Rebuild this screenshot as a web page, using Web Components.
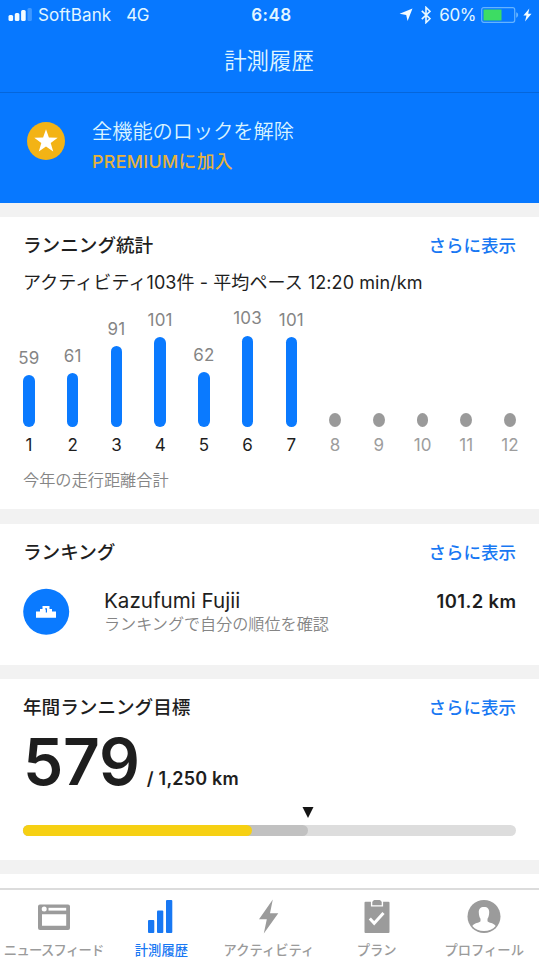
<!DOCTYPE html>
<html lang="ja">
<head>
<meta charset="utf-8">
<meta name="viewport" content="width=device-width, initial-scale=1">
<title>計測履歴</title>
<style>
body {
  margin: 0;
  background: #f2f2f2;
  color: #1e1e1e;
  font-family: Inter, "Noto Sans CJK JP", sans-serif;
  overflow: hidden;
}
</style>
</head>
<body>
<run-app></run-app>

<script>
/**
 * Base class: every element clones its own template into an open shadow root
 */
class BaseElement extends HTMLElement {
  constructor () {
    super()
    const template = document.createElement('template')
    template.innerHTML = this.constructor.markup
    this.attachShadow({ mode: 'open' })
    this.shadowRoot.appendChild(template.content.cloneNode(true))
  }

  $ (selector) {
    return this.shadowRoot.querySelector(selector)
  }
}

/**
 * Carrier, clock and battery
 */
class StatusBar extends BaseElement {
  static markup = /* HTML */`
  <style>
  :host {
    display: grid;
    grid-template-columns: 1fr auto 1fr;
    align-items: center;
    height: 30px;
    padding: 0 7px 0 8px;
    background: #0778ff;
    color: #e2f6ff;
    font-size: 17px;
    line-height: 30px;
    box-sizing: border-box;
  }
  div {
    display: flex;
    align-items: center;
  }
  svg {
    display: block;
    flex: none;
  }
  .carrier { margin-left: 6px; letter-spacing: 0.1px; }
  .network { margin-left: 15px; letter-spacing: -0.4px; }
  .time { padding-left: 3px; font-weight: 600; letter-spacing: 0.5px; }
  .right { justify-content: flex-end; }
  .percent { margin: 0 5px 0 8px; letter-spacing: -0.4px; }
  </style>
  <div class="left">
    <svg width="24" height="14" viewBox="0 0 24 14">
      <g fill="#f4fcff">
        <rect x="0.5" y="7" width="4.6" height="6" rx="1.5"/>
        <rect x="6.8" y="5" width="4.6" height="8" rx="1.5"/>
        <rect x="13.1" y="2" width="4.6" height="11" rx="1.5"/>
      </g>
      <rect x="19.5" y="0" width="4.4" height="13" rx="1.5" fill="#3f98ff"/>
    </svg>
    <span class="carrier">SoftBank</span>
    <span class="network">4G</span>
  </div>
  <span class="time">6:48</span>
  <div class="right">
    <svg width="14" height="14" viewBox="0 0 14 14"><path d="M13.5 .5 8.6 13 7.2 6.9.6 5.8Z" fill="#f4fcff"/></svg>
    <svg width="10" height="18" viewBox="0 0 10 18" style="margin-left: 8px"><path d="M.8 4.8 9 12.7 5 16.6V1.4L9 5.3.8 13.2" fill="none" stroke="#e9f9ff" stroke-width="1.6"/></svg>
    <span class="percent">60%</span>
    <svg width="38" height="18" viewBox="0 0 38 18">
      <rect x=".7" y="1.7" width="33" height="14.6" rx="2" fill="none" stroke="#65b3ff" stroke-width="1.2"/>
      <rect x="2.5" y="3.5" width="18" height="11" fill="#3ddc63"/>
      <path d="M35.2 6.3c2.6.8 2.6 4.6 0 5.4Z" fill="#65b3ff"/>
    </svg>
    <svg width="9" height="14" viewBox="0 0 9 14" style="margin-left: 4px"><path d="M6.3.6.4 7.6h3.1L2 13.4l6.5-7.6H5.2Z" fill="#f4fcff"/></svg>
  </div>
  `
}

class NavHeader extends BaseElement {
  static markup = /* HTML */`
  <style>
  :host {
    display: block;
    height: 63px;
    box-sizing: border-box;
    padding-right: 1px;
    background: #0778ff;
    border-bottom: 1px solid #0566db;
    color: #e0f6ff;
    font-size: 22.4px;
    font-weight: 350;
    line-height: 62px;
    text-align: center;
  }
  </style>
  <slot></slot>
  `
}

class PremiumBanner extends BaseElement {
  static markup = /* HTML */`
  <style>
  :host {
    display: flex;
    align-items: flex-start;
    height: 110px;
    box-sizing: border-box;
    padding: 25px 26px;
    background: #0778ff;
  }
  svg {
    display: block;
    margin-top: 2.5px;
  }
  .text {
    margin-left: 26px;
  }
  .title {
    color: #d9f3ff;
    font-size: 20.2px;
    font-weight: 350;
    line-height: 28px;
  }
  .join {
    margin-top: 1px;
    color: #e6b23c;
    font-size: 17.8px;
    font-weight: 500;
    letter-spacing: 0.35px;
    line-height: 30px;
  }
  </style>
  <svg width="40" height="40" viewBox="0 0 40 40">
    <circle cx="20" cy="20" r="19" fill="#f3b315"/>
    <path d="M20 8.2l2.9 8.3 8.8.2-7 5.3 2.5 8.4-7.2-5-7.2 5 2.5-8.4-7-5.3 8.8-.2Z" fill="#fff"/>
  </svg>
  <div class="text">
    <div class="title"><slot name="title"></slot></div>
    <div class="join"><slot name="join"></slot></div>
  </div>
  `
}

/**
 * White card with a heading and a "more" link
 */
class SectionCard extends BaseElement {
  static markup = /* HTML */`
  <style>
  :host {
    display: block;
    box-sizing: border-box;
    margin-top: 14px;
    padding: 14px 23px 0;
    background: #fff;
  }
  header {
    display: flex;
    justify-content: space-between;
    align-items: center;
    height: 28px;
    line-height: 28px;
  }
  .heading {
    font-size: 18.6px;
    font-weight: 500;
  }
  .more {
    padding-top: 1px;
    color: #1878f3;
    font-size: 17.5px;
    font-weight: 500;
  }
  </style>
  <header>
    <span class="heading"><slot name="heading"></slot></span>
    <span class="more">さらに表示</span>
  </header>
  <slot></slot>
  `
}

/**
 * One month of the chart
 * @var value distance, left out for months to come
 * @var size height of the bar in px
 */
class MonthBar extends BaseElement {
  static markup = /* HTML */`
  <style>
  :host {
    display: flex;
    flex-direction: column;
    align-items: center;
    justify-content: flex-end;
    font-size: 17px;
  }
  .value {
    color: #858585;
    line-height: 24px;
    margin-bottom: 5.5px;
    letter-spacing: 0.2px;
  }
  .bar {
    width: 11.6px;
    border-radius: 6px;
    background: #0a7aff;
  }
  .month {
    margin-top: 6px;
    line-height: 24px;
  }
  :host([future]) .bar {
    border-radius: 6px / 7px;
    background: #9a9a9a;
  }
  :host([future]) .month { color: #9d9d9d; }
  </style>
  <span class="value"></span>
  <span class="bar"></span>
  <span class="month"></span>
  `

  connectedCallback () {
    const value = this.getAttribute('value')
    this.toggleAttribute('future', !value)
    if (value) {
      this.$('.value').textContent = value
    } else {
      this.$('.value').remove()
    }
    this.$('.bar').style.height = `${this.getAttribute('size') || 14}px`
    this.$('.month').textContent = this.getAttribute('month')
  }
}

class YearChart extends BaseElement {
  static markup = /* HTML */`
  <style>
  :host { display: block; }
  .summary {
    margin-top: 10px;
    font-size: 18px;
    letter-spacing: 0.08px;
    line-height: 28px;
    white-space: nowrap;
  }
  .months {
    display: grid;
    grid-template-columns: repeat(12, 1fr);
    height: 160px;
    margin: 0 -15.9px;
  }
  .note {
    margin-top: 9px;
    color: #858585;
    font-size: 16.2px;
    font-weight: 350;
    line-height: 28px;
  }
  </style>
  <div class="summary"><slot name="summary"></slot></div>
  <div class="months"></div>
  <div class="note"><slot name="note"></slot></div>
  `

  connectedCallback () {
    const values = [[59, 52], [61, 54], [91, 81], [101, 90], [62, 55], [103, 91.5], [101, 90]]
    for (let i = 0; i < 12; i++) {
      const bar = document.createElement('month-bar')
      bar.setAttribute('month', i + 1)
      if (values[i]) {
        bar.setAttribute('value', values[i][0])
        bar.setAttribute('size', values[i][1])
      }
      this.$('.months').appendChild(bar)
    }
  }
}

class RankRow extends BaseElement {
  static markup = /* HTML */`
  <style>
  :host {
    display: flex;
    align-items: flex-start;
    margin-top: 22px;
  }
  svg { display: block; }
  .person {
    flex: 1;
    margin-left: 34px;
  }
  .name {
    font-size: 20.6px;
    line-height: 25px;
  }
  .hint {
    color: #858585;
    font-size: 16.1px;
    line-height: 22px;
    font-weight: 350;
  }
  .distance {
    font-size: 18.4px;
    font-weight: 600;
    letter-spacing: 0.4px;
    line-height: 27px;
    margin-right: -0.4px;
  }
  </style>
  <svg width="47" height="47" viewBox="0 0 47 47">
    <circle cx="23.2" cy="23.7" r="23" fill="#0a7aff"/>
    <path d="M13 23.5h4V21h2.500v-3h7v3H29v2.500h4v6.200H13Z" fill="#fff"/>
    <path d="M22.200 20.300h1.800v4.200h-1.200v-3h-.6Z" fill="#0a7aff"/>
  </svg>
  <div class="person">
    <div class="name"><slot name="name"></slot></div>
    <div class="hint"><slot name="hint"></slot></div>
  </div>
  <div class="distance"><slot name="distance"></slot></div>
  `
}

class GoalProgress extends BaseElement {
  static markup = /* HTML */`
  <style>
  :host { display: block; }
  .numbers {
    display: flex;
    align-items: baseline;
    height: 86px;
    line-height: 81px;
    white-space: nowrap;
  }
  .done {
    font-size: 64px;
    font-weight: 600;
    letter-spacing: -0.2px;
  }
  .total {
    margin-left: 7px;
    font-size: 18px;
    font-weight: 600;
    letter-spacing: 0.2px;
  }
  .marker {
    display: block;
    width: 12px;
    height: 11px;
    margin: 0 0 6.5px 279px;
  }
  .track {
    display: grid;
    height: 11.5px;
    border-radius: 6px;
    background: #ddd;
  }
  .track span {
    grid-area: 1 / 1;
    border-radius: 6px;
  }
  .expected {
    width: 57.8%;
    background: #c1c1c1;
  }
  .run {
    width: 46.4%;
    background: #f6d013;
  }
  </style>
  <div class="numbers">
    <span class="done"><slot name="done"></slot></span>
    <span class="total"><slot name="total"></slot></span>
  </div>
  <svg class="marker" viewBox="0 0 12 11"><path d="M.5 0h11L6 11Z" fill="#151515"/></svg>
  <div class="track"><span class="expected"></span><span class="run"></span></div>
  `
}

const icons = {
  feed: `
    <path fill-rule="evenodd" d="M3 5.5h28a2 2 0 0 1 2 2V29a2 2 0 0 1-2 2H3a2 2 0 0 1-2-2V7.5a2 2 0 0 1 2-2ZM5 15.2v11.6h24.2V15.2Z"/>
    <circle cx="7.2" cy="10" r="2.5" fill="#fff"/>
    <path d="M11.5 8.8h17.7v2.8H11.5Z" fill="#fff"/>`,
  stats: `
    <rect x="4" y="21" width="6.3" height="13" rx="1"/>
    <rect x="13" y="11.5" width="6.3" height="22.5" rx="1"/>
    <rect x="22" y="1" width="6.3" height="33" rx="1"/>`,
  bolt: '<path d="M20.8.5 7 20.2h7.8L11.8 34.500 26.300 14.200H18Z"/>',
  plan: `
    <path d="M5.5 2.8h5.400v4.700h12.200V2.800h5.400a1 1 0 0 1 1 1V33a1 1 0 0 1-1 1h-23a1 1 0 0 1-1-1V3.800a1 1 0 0 1 1-1Z"/>
    <path d="M12.300 6.200V3.500Q12.300 1.500 14.300 1h5.400q2 .5 2 2.500v2.700Z"/>
    <path d="M9.800 19.500l4.400 4.700L23.500 14" fill="none" stroke="#fff" stroke-width="3"/>`,
  profile: `
    <circle cx="17" cy="17.5" r="16.5"/>
    <path d="M17 8c3.700 0 5.300 2 5.200 5.600-.1 3-.8 5-1.700 6.200v2.500c1 1.700 6.500 1.700 8.200 4.700C26 30.300 21.700 32 17 32S8 30.300 5.300 27c1.700-3 7.200-3 8.200-4.700v-2.500c-.9-1.200-1.600-3.200-1.700-6.200C11.700 10 13.300 8 17 8Z" fill="#fff"/>`
}

class TabItem extends BaseElement {
  static markup = /* HTML */`
  <style>
  :host {
    display: flex;
    flex-direction: column;
    align-items: center;
    padding-top: 9px;
    color: #9b9b9b;
    font-size: 13.3px;
    font-weight: 500;
    line-height: 22px;
    white-space: nowrap;
  }
  :host([active]) { color: #1878f3; }
  :host([tight]) { letter-spacing: -0.7px; }
  svg {
    display: block;
    margin-bottom: 4.5px;
    fill: currentColor;
  }
  </style>
  <svg width="34" height="35" viewBox="0 0 34 35"></svg>
  <slot></slot>
  `

  connectedCallback () {
    this.$('svg').innerHTML = icons[this.getAttribute('icon')]
  }
}

class TabBar extends BaseElement {
  static markup = /* HTML */`
  <style>
  :host {
    display: grid;
    grid-template-columns: repeat(5, minmax(0, 1fr));
    height: 72px;
    box-sizing: border-box;
    padding-right: 1px;
    border-top: 2px solid #dcdcdc;
    background: #fff;
  }
  </style>
  <slot></slot>
  `
}

class RunApp extends BaseElement {
  static markup = /* HTML */`
  <style>
  :host {
    display: flex;
    flex-direction: column;
    height: 960px;
  }
  main {
    flex: 1;
    min-height: 0;
    overflow: hidden;
  }
  .stats { height: 292px; }
  .ranking { height: 141px; margin-top: 15px; }
  .goal { height: 181px; }
  .next {
    height: 14px;
    margin-top: 14px;
    background: #fff;
  }
  </style>
  <status-bar></status-bar>
  <nav-header>計測履歴</nav-header>
  <main>
    <premium-banner>
      <span slot="title">全機能のロックを解除</span>
      <span slot="join">PREMIUMに加入</span>
    </premium-banner>
    <section-card class="stats">
      <span slot="heading">ランニング統計</span>
      <year-chart>
        <span slot="summary">アクティビティ103件 - 平均ペース 12:20 min/km</span>
        <span slot="note">今年の走行距離合計</span>
      </year-chart>
    </section-card>
    <section-card class="ranking">
      <span slot="heading">ランキング</span>
      <rank-row>
        <span slot="name">Kazufumi Fujii</span>
        <span slot="hint">ランキングで自分の順位を確認</span>
        <span slot="distance">101.2 km</span>
      </rank-row>
    </section-card>
    <section-card class="goal">
      <span slot="heading">年間ランニング目標</span>
      <goal-progress>
        <span slot="done">579</span>
        <span slot="total">/ 1,250 km</span>
      </goal-progress>
    </section-card>
    <div class="next"></div>
  </main>
  <tab-bar>
    <tab-item icon="feed" tight>ニュースフィード</tab-item>
    <tab-item icon="stats" active>計測履歴</tab-item>
    <tab-item icon="bolt">アクティビティ</tab-item>
    <tab-item icon="plan">プラン</tab-item>
    <tab-item icon="profile">プロフィール</tab-item>
  </tab-bar>
  `
}

window.customElements.define('status-bar', StatusBar)
window.customElements.define('nav-header', NavHeader)
window.customElements.define('premium-banner', PremiumBanner)
window.customElements.define('section-card', SectionCard)
window.customElements.define('month-bar', MonthBar)
window.customElements.define('year-chart', YearChart)
window.customElements.define('rank-row', RankRow)
window.customElements.define('goal-progress', GoalProgress)
window.customElements.define('tab-item', TabItem)
window.customElements.define('tab-bar', TabBar)
window.customElements.define('run-app', RunApp)
</script>
</body>
</html>
